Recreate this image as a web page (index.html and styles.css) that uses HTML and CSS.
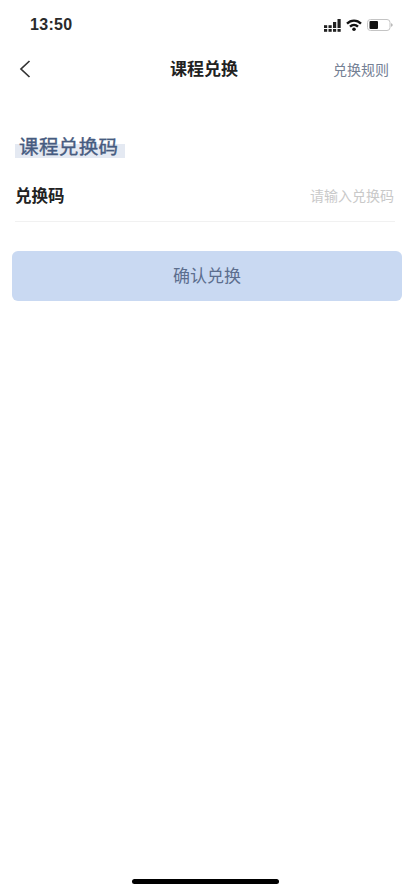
FILE: index.html
```html
<!DOCTYPE html>
<html lang="zh-CN">
<head>
    <meta charset="UTF-8">
    <meta name="viewport" content="width=device-width, initial-scale=1.0">
    <title>课程兑换</title>
    <link rel="stylesheet" href="styles.css">
</head>
<body>
    <div id="main">
        <div id="status">
            <span id="time">13:50</span>
            <div id="sicons">
                <svg width="17" height="13" viewBox="0 0 17 13" fill="#222">
                    <rect x="0" y="6.2" width="3.2" height="2.8"/><rect x="0" y="10" width="3.2" height="2.8"/>
                    <rect x="4.5" y="6.2" width="3.2" height="2.8"/><rect x="4.5" y="10" width="3.2" height="2.8"/>
                    <rect x="9" y="3" width="3.2" height="6"/><rect x="9" y="10" width="3.2" height="2.8"/>
                    <rect x="13.5" y="0" width="3.2" height="9"/><rect x="13.5" y="10" width="3.2" height="2.8"/>
                </svg>
                <svg width="16" height="12" viewBox="0 0 16 12" fill="none" stroke="#111" stroke-width="2.3">
                    <path d="M1 4.6 C5 0.6 11 0.6 15 4.6"/>
                    <path d="M4 7.6 C6.3 5.4 9.7 5.4 12 7.6"/>
                    <circle cx="8" cy="10.2" r="1.8" fill="#111" stroke="none"/>
                </svg>
                <svg width="26" height="12" viewBox="0 0 26 12">
                    <rect x="0.5" y="0.5" width="22.5" height="11" rx="3" fill="#fff" stroke="#c4c4c4"/>
                    <rect x="2.5" y="2" width="8.5" height="8" rx="1" fill="#111"/>
                    <path d="M24.2 4.2 C25.2 4.6 25.6 5.2 25.6 6 C25.6 6.8 25.2 7.4 24.2 7.8 Z" fill="#aaa"/>
                </svg>
            </div>
        </div>
        <div id="nav">
            <svg id="back" width="12" height="20" viewBox="0 0 12 20" fill="none" stroke="#333" stroke-width="1.7">
                <path d="M10.5 2 L2 10 L10.5 18"/>
            </svg>
            <h1>课程兑换</h1>
            <a id="rules">兑换规则</a>
        </div>
        <div id="content">
            <h2><span>课程兑换码</span></h2>
            <div id="row">
                <label>兑换码</label>
                <span id="hint">请输入兑换码</span>
            </div>
            <div id="btn">确认兑换</div>
        </div>
        <div id="homebar"></div>
    </div>
</body>
</html>
```

FILE: styles.css
```css
* {
    margin: 0;
    padding: 0;
    box-sizing: border-box;
    font-family: "Liberation Sans", "Noto Sans CJK SC", sans-serif;
}
html,body {
    width: 100%;
    height: 100%;
    background-color: #fff;
}
#main {
    display: flex;
    flex-direction: column;
    width: 100%;
    height: 892px;
    overflow: hidden;
}
#status {
    height: 50px;
    display: flex;
    align-items: center;
    justify-content: space-between;
    padding: 0 17px 0 30px;
}
#time {
    font-size: 16px;
    font-weight: 700;
    color: #2a2a2a;
    letter-spacing: 0.3px;
}
#sicons {
    display: flex;
    align-items: center;
    gap: 5px;
}
#nav {
    height: 38px;
    display: grid;
    grid-template-columns: 1fr auto 1fr;
    align-items: center;
    padding: 0 21px 0 19px;
}
#nav h1 {
    font-size: 17px;
    font-weight: 700;
    color: #222;
    margin-bottom: 3px;
}
#rules {
    font-size: 14px;
    color: #748094;
    justify-self: end;
    margin-bottom: 1px;
}
#content {
    flex: 1;
    padding: 48px 8px 0 12px;
}
#content h2 {
    font-size: 19.5px;
    font-weight: 400;
    -webkit-text-stroke: 0.4px #465b80;
    color: #465b80;
    line-height: 22px;
    letter-spacing: 0.4px;
    padding-left: 3px;
}
#content h2 span {
    display: inline-block;
    padding: 0 6px 0 4px;
    background: linear-gradient(to bottom, transparent 36%, #e4e9f2 36%);
}
#row {
    height: 53px;
    margin: 11px 7px 0 3px;
    display: flex;
    align-items: center;
    justify-content: space-between;
    border-bottom: 1px solid #f1f1f1;
}
#row label {
    font-size: 16.5px;
    font-weight: 700;
    color: #222;
}
#hint {
    font-size: 14px;
    color: #c9c9c9;
    margin-right: 1px;
}
#btn {
    height: 50px;
    margin-top: 29px;
    padding-bottom: 3px;
    border-radius: 6px;
    background-color: #c9d9f2;
    color: #5c6e8e;
    font-size: 17px;
    display: flex;
    align-items: center;
    justify-content: center;
}
#homebar {
    width: 147px;
    height: 5px;
    margin: 0 auto 8px;
    border-radius: 3px;
    background-color: #000;
}
```
